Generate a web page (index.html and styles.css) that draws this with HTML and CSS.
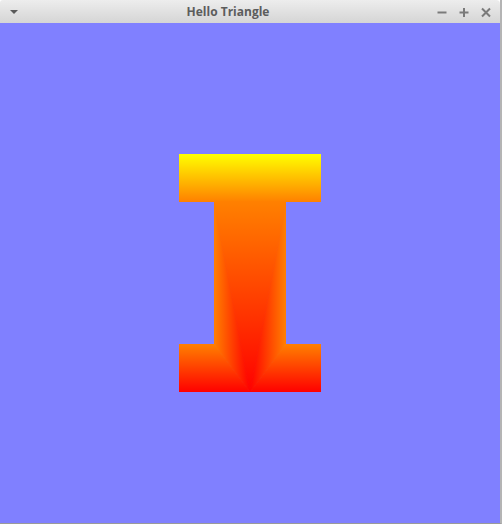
FILE: index.html
```html
<!DOCTYPE html>
<html>
<head>
<meta charset="utf-8">
<title>Hello Triangle</title>
<link rel="stylesheet" href="styles.css">
</head>
<body>
<div class="window">
  <div class="titlebar">
    <div class="menu"><span class="menu-arrow"></span></div>
    <span class="title">Hello Triangle</span>
    <div class="controls">
      <svg class="ctl" width="12" height="12" viewBox="0 0 12 12"><path d="M1.5 6.5h9" stroke="#7a7a7a" stroke-width="2"/></svg>
      <svg class="ctl" width="12" height="12" viewBox="0 0 12 12"><path d="M1.5 6.5h9M6 2v9" stroke="#7a7a7a" stroke-width="2"/></svg>
      <svg class="ctl" width="12" height="12" viewBox="0 0 12 12"><path d="M2 2.5l8 8M10 2.5l-8 8" stroke="#7a7a7a" stroke-width="2"/></svg>
    </div>
  </div>
  <div class="viewport">
    <svg class="scene" width="500" height="500" viewBox="0 0 500 500">
      <defs>
        <clipPath id="ishape">
          <path d="M179 131H321V179H286V321H321V369H179V321H214V179H179Z"/>
        </clipPath>
        <linearGradient id="gTop" gradientUnits="userSpaceOnUse" x1="0" y1="131" x2="0" y2="179">
          <stop offset="0" stop-color="#ffff00"/><stop offset="1" stop-color="#ff8000"/>
        </linearGradient>
        <linearGradient id="gMid" gradientUnits="userSpaceOnUse" x1="0" y1="179" x2="0" y2="369">
          <stop offset="0" stop-color="#ff8000"/><stop offset="1" stop-color="#ff0000"/>
        </linearGradient>
        <linearGradient id="gBot" gradientUnits="userSpaceOnUse" x1="0" y1="321" x2="0" y2="369">
          <stop offset="0" stop-color="#ff8000"/><stop offset="1" stop-color="#ff0000"/>
        </linearGradient>
        <linearGradient id="gLeft" gradientUnits="userSpaceOnUse" x1="214" y1="0" x2="250" y2="0">
          <stop offset="0" stop-color="#ff8000"/><stop offset="1" stop-color="#ff0000"/>
        </linearGradient>
        <linearGradient id="gRight" gradientUnits="userSpaceOnUse" x1="286" y1="0" x2="250" y2="0">
          <stop offset="0" stop-color="#ff8000"/><stop offset="1" stop-color="#ff0000"/>
        </linearGradient>
      </defs>
      <g clip-path="url(#ishape)" stroke-width="1" stroke-linejoin="round">
        <polygon points="179,131 321,131 321,179 179,179" fill="url(#gTop)" stroke="url(#gTop)"/>
        <polygon points="179,321 214,321 250,369 179,369" fill="url(#gBot)" stroke="url(#gBot)"/>
        <polygon points="286,321 321,321 321,369 250,369" fill="url(#gBot)" stroke="url(#gBot)"/>
        <polygon points="250,369 214,321 214,179" fill="url(#gLeft)" stroke="url(#gLeft)"/>
        <polygon points="250,369 286,179 286,321" fill="url(#gRight)" stroke="url(#gRight)"/>
        <polygon points="250,369 214,179 286,179" fill="url(#gMid)" stroke="url(#gMid)"/>
      </g>
    </svg>
  </div>
</div>
</body>
</html>
```
FILE: styles.css
```css
html, body {
  margin: 0;
  padding: 0;
  background: #ffffff;
}

.window {
  width: 500px;
  height: 523px;
  border-right: 2px solid #b4b4b4;
  border-bottom: 1px solid #9a9a9a;
  display: flex;
  flex-direction: column;
}

.titlebar {
  height: 23px;
  flex: none;
  display: flex;
  align-items: center;
  background: linear-gradient(#ededed, #d5d5d5);
  border-top-left-radius: 3px;
  border-top-right-radius: 4px;
  font-family: "Open Sans", "Noto Sans", sans-serif;
}

.menu {
  width: 20px;
  flex: none;
  box-sizing: border-box;
  padding-left: 10px;
  padding-top: 1px;
  display: flex;
}

.menu-arrow {
  width: 0;
  height: 0;
  border-left: 4px solid transparent;
  border-right: 4px solid transparent;
  border-top: 4px solid #5a5a5a;
}

.title {
  flex: 1;
  text-align: center;
  font-weight: bold;
  font-size: 12px;
  color: #5c5c5c;
}

.controls {
  flex: none;
  display: flex;
  gap: 10px;
  padding-right: 8px;
}

.ctl {
  display: block;
}

.viewport {
  flex: 1;
  background: #8080ff;
}

.scene {
  display: block;
}
```
